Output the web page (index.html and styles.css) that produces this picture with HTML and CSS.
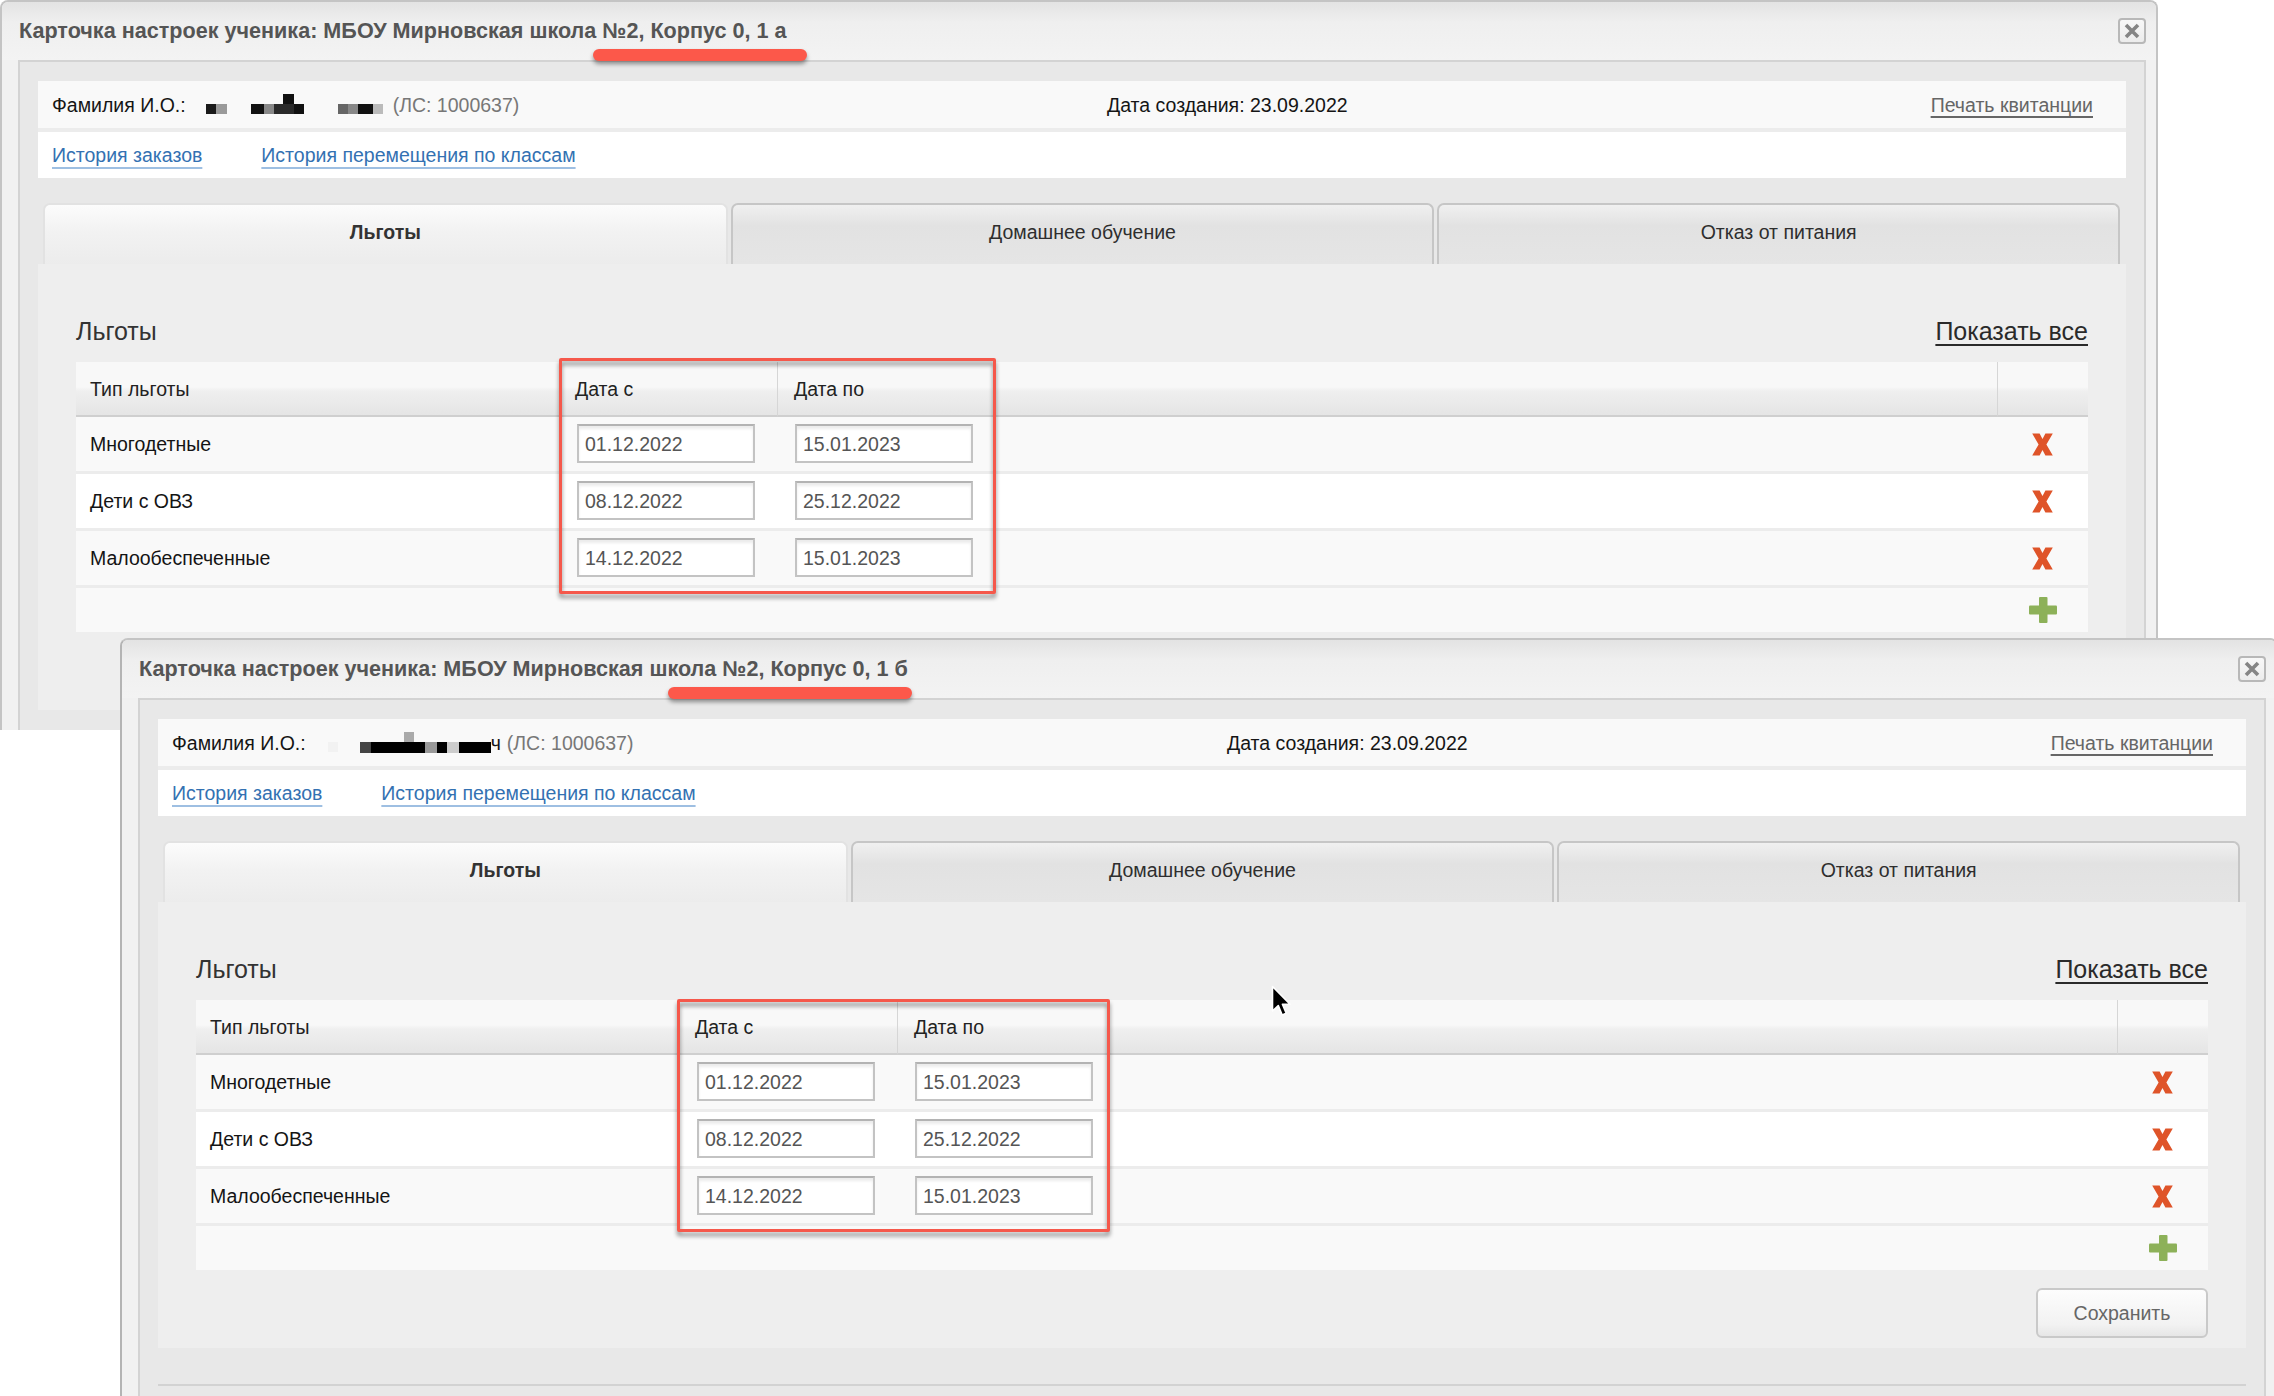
FILE: index.html
```html
<!DOCTYPE html>
<html lang="ru">
<head>
<meta charset="utf-8">
<title>Карточка настроек ученика</title>
<link rel="stylesheet" href="styles.css">
</head>
<body>
<div class="desktop">

  <section class="win win-a">
    <header class="titlebar">
      <span class="title">Карточка настроек ученика: МБОУ Мирновская школа №2, Корпус 0, 1 а</span>
      <span class="close"><svg width="16" height="16" viewBox="0 0 16 16"><path d="M2 2 L14 14 M14 2 L2 14" stroke="#858585" stroke-width="3.6"/></svg></span>
    </header>
    <div class="panel">
      <div class="info">
        <span class="who">Фамилия И.О.:<svg class="mosaic" width="201" height="24" viewBox="0 0 201 24"><rect x="20" y="10" width="10" height="10" fill="#1a1a1a"/><rect x="30" y="10" width="11" height="10" fill="#9a9a9a"/><rect x="65" y="10" width="13" height="10" fill="#111"/><rect x="78" y="10" width="10" height="10" fill="#888"/><rect x="88" y="10" width="20" height="10" fill="#2a2a2a"/><rect x="97" y="0" width="11" height="10" fill="#111"/><rect x="108" y="10" width="10" height="10" fill="#111"/><rect x="152" y="10" width="10" height="10" fill="#666"/><rect x="162" y="10" width="10" height="10" fill="#888"/><rect x="172" y="10" width="15" height="10" fill="#111"/><rect x="187" y="10" width="10" height="10" fill="#bbb"/></svg><span class="acc">(ЛС: 1000637)</span></span>
        <span class="created">Дата создания: 23.09.2022</span>
        <a class="print" href="#">Печать квитанции</a>
      </div>
      <nav class="links"><a href="#">История заказов</a><a href="#">История перемещения по классам</a></nav>
      <div class="tabs">
        <div class="tab active">Льготы</div>
        <div class="tab">Домашнее обучение</div>
        <div class="tab">Отказ от питания</div>
      </div>
      <div class="pane">
        <div class="pane-head"><span class="pane-title">Льготы</span><a class="show-all" href="#">Показать все</a></div>
        <table class="grid">
          <colgroup><col class="w-type"><col class="w-date"><col class="w-date2"><col class="w-fill"><col class="w-act"></colgroup>
          <thead><tr><th>Тип льготы</th><th>Дата с</th><th class="sep">Дата по</th><th></th><th class="sep"></th></tr></thead>
          <tbody>
            <tr class="light"><td>Многодетные</td><td><input class="date" value="01.12.2022"></td><td><input class="date" value="15.01.2023"></td><td></td><td class="act"><svg width="25" height="23" viewBox="0 0 25 23"><path d="M2.2 0.5h7.4l2.9 5.4 2.9-5.4h7.4l-6.4 11 6.4 11h-7.4l-2.9-5.4-2.9 5.4h-7.4l6.4-11z" fill="#df5429"/></svg></td></tr>
            <tr class="white"><td>Дети с ОВЗ</td><td><input class="date" value="08.12.2022"></td><td><input class="date" value="25.12.2022"></td><td></td><td class="act"><svg width="25" height="23" viewBox="0 0 25 23"><path d="M2.2 0.5h7.4l2.9 5.4 2.9-5.4h7.4l-6.4 11 6.4 11h-7.4l-2.9-5.4-2.9 5.4h-7.4l6.4-11z" fill="#df5429"/></svg></td></tr>
            <tr class="light"><td>Малообеспеченные</td><td><input class="date" value="14.12.2022"></td><td><input class="date" value="15.01.2023"></td><td></td><td class="act"><svg width="25" height="23" viewBox="0 0 25 23"><path d="M2.2 0.5h7.4l2.9 5.4 2.9-5.4h7.4l-6.4 11 6.4 11h-7.4l-2.9-5.4-2.9 5.4h-7.4l6.4-11z" fill="#df5429"/></svg></td></tr>
            <tr class="add"><td colspan="4"></td><td class="act"><svg width="28" height="26" viewBox="0 0 28 26"><rect x="10" y="0" width="8.5" height="26" rx="1" fill="#8db159"/><rect x="0" y="8.5" width="28" height="9" rx="1" fill="#8db159"/></svg></td></tr>
          </tbody>
        </table>
        <div class="actions"><button class="btn" type="button">Сохранить</button></div>
      </div>
      <div class="pane-foot"></div>
    </div>
    <span class="stroke stroke-a"></span>
    <span class="mark mark-a"></span>
  </section>

  <section class="win win-b">
    <header class="titlebar">
      <span class="title">Карточка настроек ученика: МБОУ Мирновская школа №2, Корпус 0, 1 б</span>
      <span class="close"><svg width="16" height="16" viewBox="0 0 16 16"><path d="M2 2 L14 14 M14 2 L2 14" stroke="#858585" stroke-width="3.6"/></svg></span>
    </header>
    <div class="panel">
      <div class="info">
        <span class="who">Фамилия И.О.:<svg class="mosaic" width="185" height="24" viewBox="0 0 185 24"><rect x="22" y="10" width="10" height="10" fill="#f2f2f2"/><rect x="54" y="10" width="11" height="11" fill="#444"/><rect x="65" y="10" width="54" height="11" fill="#000"/><rect x="98" y="0" width="10" height="10" fill="#aaa"/><rect x="119" y="10" width="12" height="11" fill="#999"/><rect x="131" y="10" width="10" height="11" fill="#000"/><rect x="141" y="10" width="12" height="11" fill="#ccc"/><rect x="153" y="10" width="32" height="11" fill="#000"/></svg><span>ч</span><span class="acc">(ЛС: 1000637)</span></span>
        <span class="created">Дата создания: 23.09.2022</span>
        <a class="print" href="#">Печать квитанции</a>
      </div>
      <nav class="links"><a href="#">История заказов</a><a href="#">История перемещения по классам</a></nav>
      <div class="tabs">
        <div class="tab active">Льготы</div>
        <div class="tab">Домашнее обучение</div>
        <div class="tab">Отказ от питания</div>
      </div>
      <div class="pane">
        <div class="pane-head"><span class="pane-title">Льготы</span><a class="show-all" href="#">Показать все</a></div>
        <table class="grid">
          <colgroup><col class="w-type"><col class="w-date"><col class="w-date2"><col class="w-fill"><col class="w-act"></colgroup>
          <thead><tr><th>Тип льготы</th><th>Дата с</th><th class="sep">Дата по</th><th></th><th class="sep"></th></tr></thead>
          <tbody>
            <tr class="light"><td>Многодетные</td><td><input class="date" value="01.12.2022"></td><td><input class="date" value="15.01.2023"></td><td></td><td class="act"><svg width="25" height="23" viewBox="0 0 25 23"><path d="M2.2 0.5h7.4l2.9 5.4 2.9-5.4h7.4l-6.4 11 6.4 11h-7.4l-2.9-5.4-2.9 5.4h-7.4l6.4-11z" fill="#df5429"/></svg></td></tr>
            <tr class="white"><td>Дети с ОВЗ</td><td><input class="date" value="08.12.2022"></td><td><input class="date" value="25.12.2022"></td><td></td><td class="act"><svg width="25" height="23" viewBox="0 0 25 23"><path d="M2.2 0.5h7.4l2.9 5.4 2.9-5.4h7.4l-6.4 11 6.4 11h-7.4l-2.9-5.4-2.9 5.4h-7.4l6.4-11z" fill="#df5429"/></svg></td></tr>
            <tr class="light"><td>Малообеспеченные</td><td><input class="date" value="14.12.2022"></td><td><input class="date" value="15.01.2023"></td><td></td><td class="act"><svg width="25" height="23" viewBox="0 0 25 23"><path d="M2.2 0.5h7.4l2.9 5.4 2.9-5.4h7.4l-6.4 11 6.4 11h-7.4l-2.9-5.4-2.9 5.4h-7.4l6.4-11z" fill="#df5429"/></svg></td></tr>
            <tr class="add"><td colspan="4"></td><td class="act"><svg width="28" height="26" viewBox="0 0 28 26"><rect x="10" y="0" width="8.5" height="26" rx="1" fill="#8db159"/><rect x="0" y="8.5" width="28" height="9" rx="1" fill="#8db159"/></svg></td></tr>
          </tbody>
        </table>
        <div class="actions"><button class="btn" type="button">Сохранить</button></div>
      </div>
      <div class="pane-foot"></div>
    </div>
    <span class="stroke stroke-b"></span>
    <span class="mark mark-b"></span>
  </section>

  <svg class="cursor" width="22" height="34" viewBox="0 0 22 34"><path d="M1.5 1.5 L1.5 26 L7.3 20.6 L11.2 30 L15.2 28.3 L11.4 19.2 L19 19.2 Z" fill="#000" stroke="#fff" stroke-width="1.6" stroke-linejoin="round"/></svg>
</div>
</body>
</html>
```

FILE: styles.css
```css
* { box-sizing: border-box; }
html, body { margin: 0; padding: 0; }
body {
  background: #ffffff;
  font-family: "Liberation Sans", Arial, sans-serif;
  font-size: 19.5px;
  color: #1c1c1c;
  overflow: hidden;
}
a { color: inherit; }

.desktop {
  position: relative;
  width: 2274px;
  height: 1396px;
  overflow: hidden;
  background: #ffffff;
}

/* window */
.win {
  position: absolute;
  width: 2158px;
  border: 2px solid #c4c4c4;
  border-bottom: none;
  border-radius: 8px 8px 0 0;
  background: #f1f1f1;
  overflow: hidden;
}
.win-a { left: 0; top: 0; height: 730px; }
.win-b { left: 120px; top: 638px; height: 820px; border-left-color: #b4b4b4; }

.titlebar {
  height: 58px;
  display: flex;
  align-items: center;
  justify-content: space-between;
  padding: 0 10px 0 17px;
  background: linear-gradient(#e3e3e3, #efefef 35%, #f3f3f3);
}
.title {
  font-weight: bold;
  font-size: 21.6px;
  color: #555555;
}
.close {
  width: 28px;
  height: 26px;
  border: 2px solid #b8b8b8;
  border-radius: 4px;
  background: linear-gradient(#f8f8f8, #ececec);
  display: flex;
  align-items: center;
  justify-content: center;
}

.panel {
  margin: 0 10px 0 16px;
  height: 700px;
  border: 2px solid #d3d3d3;
  border-bottom: none;
  background: #e8e8e8;
  padding: 19px 18px 0;
}

.info {
  height: 51px;
  border-bottom: 4px solid #ececec;
  background: #f9f9f9;
  display: grid;
  grid-template-columns: 1055px 1fr auto;
  align-items: center;
  padding: 2px 33px 0 14px;
  color: #151515;
}
.who { display: flex; align-items: center; white-space: nowrap; }
.mosaic { display: block; }
.acc { color: #777777; margin-left: 6px; }
.print {
  color: #666666;
  text-decoration: underline;
  text-decoration-thickness: 2px;
  text-underline-offset: 4px;
}

.links {
  height: 46px;
  background: #ffffff;
  display: flex;
  align-items: center;
  gap: 59px;
  padding-left: 14px;
}
.links a {
  color: #3371b2;
  text-decoration: underline;
  text-decoration-color: #9ebfe2;
  text-decoration-thickness: 2px;
  text-underline-offset: 5px;
}

.tabs {
  margin: 25px 6px 0 5px;
  height: 61px;
  display: grid;
  grid-template-columns: 685fr 704fr 683fr;
  column-gap: 3px;
}
.tab {
  display: flex;
  align-items: center;
  justify-content: center;
  padding-bottom: 4px;
  border: 2px solid #c6c6c6;
  border-bottom: none;
  border-radius: 7px 7px 0 0;
  background: linear-gradient(#f0f0f0, #e2e2e2 35%, #e5e5e5);
  color: #2e2e2e;
}
.tab.active {
  border-color: #e2e2e2;
  background: linear-gradient(#fcfcfc, #f2f2f2 45%, #ececec);
  font-weight: bold;
  color: #333333;
}

.pane {
  background: #eeeeee;
  padding: 52px 38px 10px;
}
.pane-head {
  display: flex;
  justify-content: space-between;
  align-items: center;
  height: 30px;
  margin-bottom: 16px;
}
.pane-title { font-size: 25px; color: #333333; }
.show-all {
  font-size: 25px;
  color: #2a2a2a;
  text-decoration: underline;
  text-decoration-thickness: 2px;
  text-underline-offset: 4px;
}

/* table */
.grid {
  width: 100%;
  table-layout: fixed;
  border-collapse: separate;
  border-spacing: 0;
}
.w-type { width: 483px; }
.w-date { width: 218px; }
.w-date2 { width: 220px; }
.w-fill { width: 1000px; }
.w-act { width: 91px; }

.grid th {
  height: 55px;
  padding: 2px 0 0 16px;
  text-align: left;
  font-weight: normal;
  color: #222222;
  border-bottom: 2px solid #cfcfcf;
  background: linear-gradient(#f8f8f8 0%, #f8f8f8 47%, #efefef 55%, #e5e5e5 100%);
}
.grid th:first-child { padding-left: 14px; }
.grid th.sep { border-left: 1px solid #d6d6d6; }
.grid td {
  height: 57px;
  padding: 0 0 0 18px;
  border-bottom: 3px solid #ececec;
  color: #141414;
}
.grid td:first-child { padding-left: 14px; }
.grid tr.light td { background: #f9f9f9; }
.grid tr.white td { background: #ffffff; }
.grid tr.add td { height: 44px; background: #f9f9f9; border-bottom: none; }
.grid td.act { padding: 0; text-align: center; }
.grid td.act svg { display: inline-block; vertical-align: middle; }

.date {
  width: 178px;
  height: 39px;
  border: 2px solid #c3c3c3;
  border-top-color: #b3b3b3;
  background: #ffffff;
  box-shadow: inset 0 3px 3px rgba(0, 0, 0, 0.08);
  padding: 2px 0 0 6px;
  font-family: "Liberation Sans", Arial, sans-serif;
  font-size: 19.5px;
  color: #555555;
  display: block;
  margin-top: -2px;
}

.actions {
  display: flex;
  justify-content: flex-end;
  margin-top: 18px;
}
.btn {
  width: 172px;
  height: 50px;
  border: 2px solid #c9c9c9;
  border-radius: 6px;
  background: linear-gradient(#fdfdfd, #f2f2f2 75%, #e6e6e6);
  font-family: "Liberation Sans", Arial, sans-serif;
  font-size: 19.5px;
  color: #666666;
}

.pane-foot {
  margin-top: 36px;
  border-top: 2px solid #d2d2d2;
  height: 120px;
}

/* annotations drawn over the screenshot */
.stroke {
  position: absolute;
  top: 47px;
  height: 12px;
  border-radius: 6px;
  background: #fc584a;
  filter: drop-shadow(0 3px 2px rgba(0, 0, 0, 0.4));
}
.stroke-a { left: 591px; width: 214px; }
.stroke-b { left: 546px; width: 244px; }

.mark {
  position: absolute;
  border: 3px solid #f5584b;
  border-radius: 2px;
  filter: drop-shadow(0 4px 2px rgba(0, 0, 0, 0.45));
}
.mark-a { left: 557px; top: 356px; width: 437px; height: 236px; }
.mark-b { left: 555px; top: 359px; width: 433px; height: 233px; }

.cursor {
  position: absolute;
  left: 1271px;
  top: 985px;
}
```
